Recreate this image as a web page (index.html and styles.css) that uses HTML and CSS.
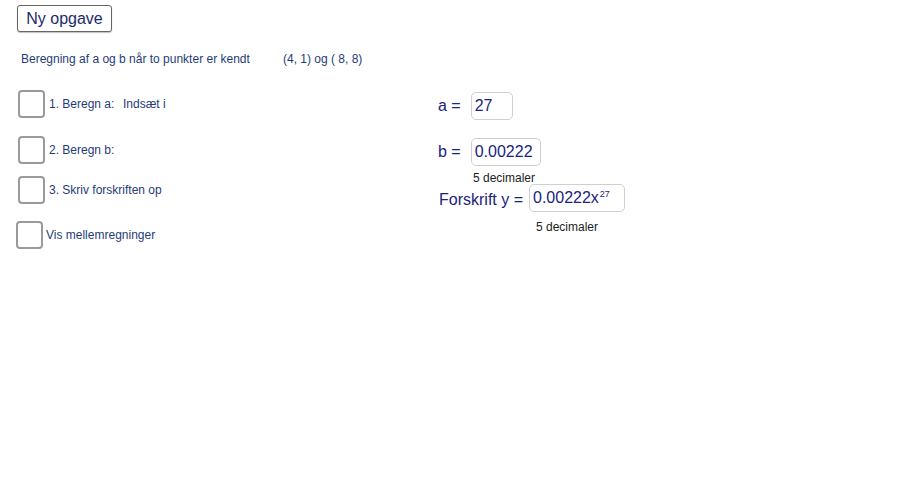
FILE: index.html
```html
<!DOCTYPE html>
<html>
<head>
<meta charset="utf-8">
<link rel="stylesheet" href="styles.css">
</head>
<body>
<div class="applet">
  <button class="btn">Ny opgave</button>

  <div class="title">Beregning af a og b når to punkter er kendt</div>
  <div class="points">(4, 1) og ( 8, 8)</div>

  <label class="check c1"><span class="box"></span><span class="lbl">1. Beregn a:</span></label>
  <div class="hint">Indsæt i</div>
  <label class="check c2"><span class="box"></span><span class="lbl">2. Beregn b:</span></label>
  <label class="check c3"><span class="box"></span><span class="lbl">3. Skriv forskriften op</span></label>
  <label class="check c4"><span class="box"></span><span class="lbl">Vis mellemregninger</span></label>

  <div class="field fa"><span class="flabel">a =</span><span class="input wa">27</span></div>
  <div class="field fb"><span class="flabel">b =</span><span class="input wb">0.00222</span></div>
  <div class="note n1">5 decimaler</div>
  <div class="field fy"><span class="flabel">Forskrift y =</span><span class="input wy">0.00222x<sup>27</sup></span></div>
  <div class="note n2">5 decimaler</div>
</div>
</body>
</html>
```

FILE: styles.css
```css
html, body {
  margin: 0;
  padding: 0;
  background: #fff;
}
.applet {
  position: relative;
  width: 900px;
  height: 480px;
  font-family: "Liberation Sans", Arial, sans-serif;
  overflow: hidden;
}
.applet > * {
  position: absolute;
}
.btn {
  left: 17px;
  top: 5px;
  width: 95px;
  height: 27px;
  box-sizing: border-box;
  border: 1px solid #666;
  border-radius: 3px;
  background: #fff;
  box-shadow: 0 1px 1px rgba(0,0,0,0.25);
  font-family: "Liberation Sans", Arial, sans-serif;
  font-size: 16px;
  color: #1a2a6c;
  padding: 0;
  line-height: 24px;
  text-align: center;
}
.title, .points, .hint, .lbl {
  font-size: 12px;
  color: #1f3c78;
  line-height: 14px;
}
.title { left: 21px; top: 52px; }
.points { left: 283px; top: 52px; }
.hint { left: 123px; top: 97px; }
.check {
  display: flex;
  align-items: center;
  gap: 4px;
}
.box {
  width: 27px;
  height: 28px;
  box-sizing: border-box;
  border: 2px solid #9a9a9a;
  border-radius: 4px;
  background: #fff;
}
.lbl { margin-top: 0; }
.c1 { left: 18px; top: 90px; }
.c2 { left: 18px; top: 136px; }
.c3 { left: 18px; top: 176px; }
.c4 { left: 16px; top: 221px; gap: 3px; }

.field {
  display: flex;
  align-items: center;
  gap: 10px;
  font-size: 16px;
  color: #1a237e;
}
.flabel { line-height: 18px; }
.input {
  box-sizing: border-box;
  height: 28px;
  border: 1px solid #cfcfcf;
  border-radius: 5px;
  padding: 0 3px;
  line-height: 26px;
  font-size: 16px;
  color: #1a237e;
  background: #fff;
}
.input sup {
  font-size: 9px;
  vertical-align: 0;
  position: relative;
  top: -6px;
  margin-left: 1px;
}
.fa { left: 438px; top: 92px; }
.wa { width: 42px; }
.fb { left: 438px; top: 138px; }
.wb { width: 70px; }
.fy { left: 439px; top: 184px; gap: 6px; }
.fy .flabel { margin-top: 3px; }
.wy { width: 96px; }
.note {
  font-size: 12px;
  color: #222;
  line-height: 14px;
}
.n1 { left: 473px; top: 171px; }
.n2 { left: 536px; top: 220px; }
```
